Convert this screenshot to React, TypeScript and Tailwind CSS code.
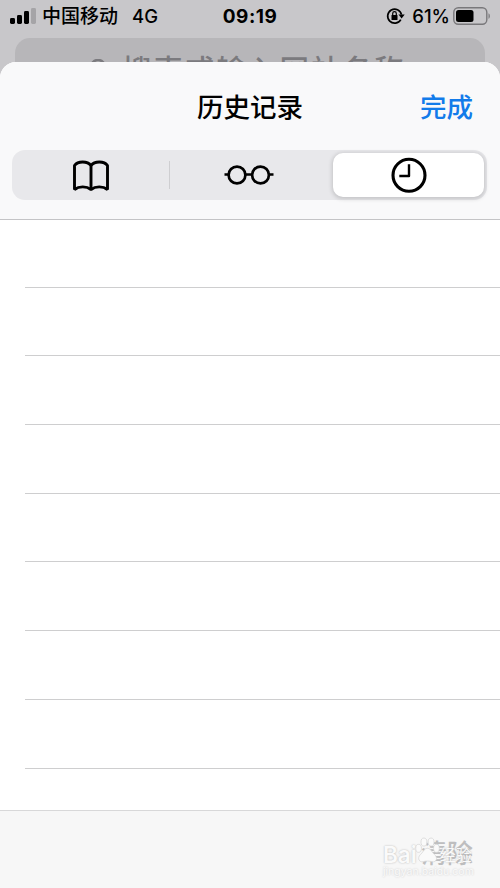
import type { ReactNode } from 'react';

const rows = Array.from({ length: 8 }, (_, index) => index);

const StatusBar = () => (
  <div className="relative flex h-[38px] shrink-0 items-start justify-between pt-[4px] pr-[9px] pl-[10px] text-black">
    <div className="flex h-6 items-center">
      <svg className="mr-[5px] mb-[2px]" fill="currentColor" height="18" viewBox="0 0 27 18" width="27">
        <rect height="6" rx="1.4" width="5" x="0" y="12" />
        <rect height="9" rx="1.4" width="5" x="7" y="9" />
        <rect height="13" rx="1.4" width="5" x="14" y="5" />
        <rect fill="#a5a4a7" height="16" rx="1.4" width="5" x="21" y="2" />
      </svg>
      <span className="mt-[2px] font-medium text-[19px] leading-6">中国移动</span>
      <span className="ml-[14px] font-medium text-[18.5px] leading-6">4G</span>
    </div>
    <span className="absolute top-[5px] left-[222px] w-[56px] whitespace-nowrap text-center font-bold text-[19px] leading-6 tracking-[0.5px]">
      09:19
    </span>
    <div className="flex h-6 items-center">
      <svg className="mr-[7px]" fill="none" height="18" viewBox="0 0 18 18" width="19">
        <path d="M14.3 12.600A7 7 0 1 1 15 7.600" stroke="currentColor" strokeWidth="1.7" />
        <path d="M12 7.4H18.200l-3.100 4.200z" fill="currentColor" />
        <rect fill="currentColor" height="5" rx=".6" width="6" x="5" y="8" />
        <path d="M6.2 8V6.5a1.8 1.8 0 0 1 3.6 0V8" stroke="currentColor" strokeWidth="1.2" />
      </svg>
      <span className="mr-[3px] font-medium text-[18.5px] leading-6">61%</span>
      <svg className="mb-[1px]" fill="none" height="18" viewBox="0 0 38 18" width="38">
        <rect height="16.5" rx="4.5" stroke="#79787b" strokeWidth="1.4" width="33" x=".8" y=".8" />
        <rect fill="currentColor" height="12" rx="2.5" width="17.5" x="3" y="3" />
        <path d="M35.5 6.2v5.6c1.8-.7 1.8-4.9 0-5.6z" fill="#79787b" />
      </svg>
    </div>
  </div>
);

const SearchField = () => (
  <div className="h-6 shrink-0 overflow-hidden px-[15px]">
    <div className="flex h-[64px] items-center rounded-[15px] bg-[#b7b6b9] pl-[74px] text-[#7b7a7e]">
      <svg className="mr-[11px]" fill="none" height="22" viewBox="0 0 22 22" width="22">
        <circle cx="9" cy="8" r="7" stroke="currentColor" strokeWidth="2.6" />
        <path d="m14 13 6 6" stroke="currentColor" strokeWidth="2.6" />
      </svg>
      <span className="whitespace-nowrap font-medium text-[29.5px] leading-[50px] tracking-[2px]">
        搜索或输入网站名称
      </span>
    </div>
  </div>
);

const BookIcon = () => (
  <svg className="mt-[2px]" fill="none" height="32" stroke="currentColor" strokeWidth="2.9" viewBox="0 0 38 32" width="38">
    <path
      d="M19 5.5C15.5 .8 5.8 .8 2.5 5.5V29.5c4.5-3.5 12-3.5 16.5 0 4.5-3.5 12-3.5 16.5 0V5.5C32.2 .8 22.5 .8 19 5.5z"
      strokeLinejoin="bevel"
    />
    <path d="M19 5v24.5" />
  </svg>
);

const GlassesIcon = () => (
  <svg className="mr-[2px]" fill="none" height="22" stroke="currentColor" strokeWidth="2.7" viewBox="0 0 50 22" width="50">
    <circle cx="13" cy="11" r="8.4" />
    <circle cx="36.5" cy="11" r="8.4" />
    <path d="M.5 10.5h4.5M21 10.5h7.5M44.5 10.5h5" />
  </svg>
);

const ClockIcon = () => (
  <svg fill="none" height="36" stroke="currentColor" viewBox="0 0 36 36" width="36">
    <circle cx="18" cy="18.3" r="16" strokeWidth="3.1" />
    <path d="M18 7.2V19H8.3" strokeLinejoin="round" strokeWidth="2.4" />
  </svg>
);

const Tab = ({ className, children }: { className: string; children: ReactNode }) => (
  <button className={`flex items-center justify-center ${className}`} type="button">
    {children}
  </button>
);

const Watermark = () => (
  <div className="absolute top-[24px] left-[383px] text-[#fafafa]">
    <div className="flex items-center font-semibold text-[22.5px] leading-[40px] [text-shadow:0_0_2px_#b4b4b4]">
      <span>Bai</span>
      <svg className="-ml-[2px] mb-[9px]" fill="currentColor" height="28" stroke="#d4d4d4" strokeWidth=".8" viewBox="0 0 28 30" width="25">
        <ellipse cx="4" cy="12" rx="3.2" ry="4.5" />
        <ellipse cx="10" cy="5" rx="3.3" ry="4.5" />
        <ellipse cx="18" cy="5" rx="3.3" ry="4.5" />
        <ellipse cx="24" cy="12" rx="3.2" ry="4.5" />
        <path d="M14 12c-4 0-5 5-8 7-4 4-1 9 3 8 3-1 7-1 10 0 5 1 7-4 3-8-3-2-4-7-8-7z" />
      </svg>
      <span className="font-normal text-[16px]">经验</span>
    </div>
    <div className="-mt-[9px] text-[10.5px] leading-3 [text-shadow:0_0_2px_#c4c4c4]">jingyan.baidu.com</div>
  </div>
);

export default function App() {
  return (
    <div className="flex h-[888px] w-[500px] flex-col overflow-hidden bg-[#c8c7ca] font-[Inter,'Noto_Sans_CJK_SC',sans-serif]">
      <StatusBar />
      <SearchField />
      <main className="flex min-h-0 flex-1 flex-col overflow-hidden rounded-t-[16px] bg-white text-black">
        <header className="h-[158px] shrink-0 border-[#c4c4c6] border-b bg-[#f9f9fa]">
          <div className="grid h-[88px] grid-cols-[1fr_auto_1fr] items-center px-[27px] pt-[2px]">
            <h1 className="col-start-2 font-medium text-[26.5px] leading-10">历史记录</h1>
            <button className="justify-self-end font-medium text-[#127bea] text-[26.5px] leading-10" type="button">
              完成
            </button>
          </div>
          <div className="mr-[13px] ml-[12px] flex h-[50px] items-center rounded-[13px] bg-[#e8e8eb]">
            <Tab className="w-[157px]">
              <BookIcon />
            </Tab>
            <div className="h-7 w-px bg-[#ceced1]" />
            <Tab className="w-[159px]">
              <GlassesIcon />
            </Tab>
            <Tab className="ml-[4px] h-[44px] w-[151px] rounded-[10px] bg-white shadow-[0_1px_4px_1px_rgba(0,0,0,0.16)]">
              <ClockIcon />
            </Tab>
          </div>
        </header>
        <div className="-mt-px flex-1 pl-[25px]">
          {rows.map((row) => (
            <div className="h-[68.7px] border-[#cececf] border-b" key={row} />
          ))}
        </div>
        <footer className="relative h-[78px] shrink-0 border-[#d8d8d9] border-t bg-[#f7f7f7]">
          <button
            className="absolute top-[23px] right-[27px] font-medium text-[#bebebf] text-[26px] leading-10"
            type="button"
          >
            清除
          </button>
          <Watermark />
        </footer>
      </main>
    </div>
  );
}
